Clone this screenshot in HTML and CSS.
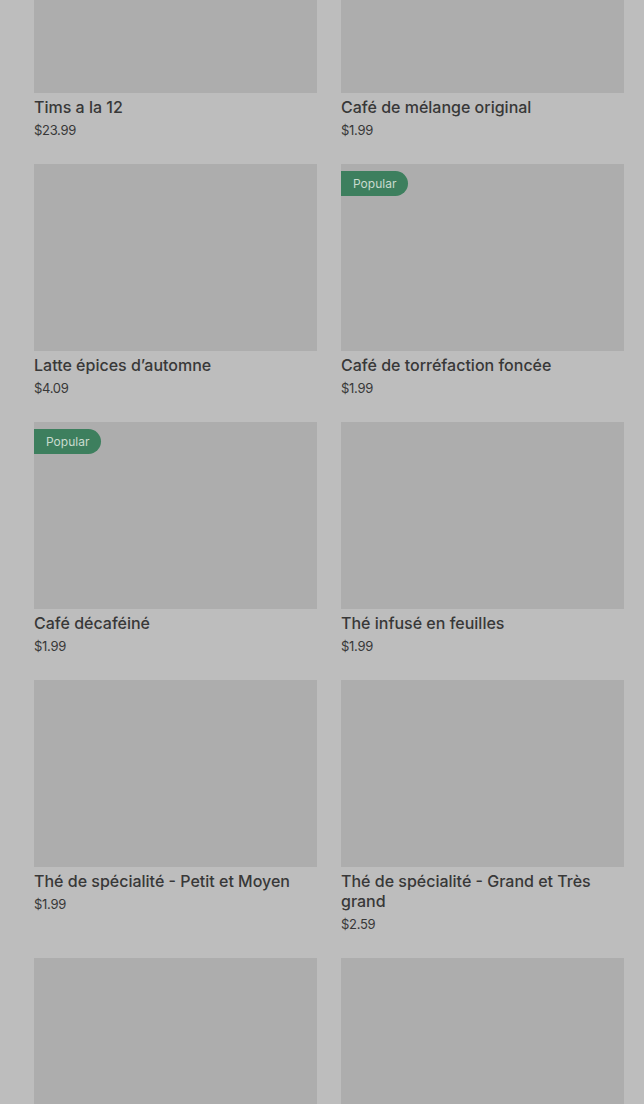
FILE: index.html
```html
<!DOCTYPE html>
<html lang="fr">
<head>
    <meta charset="UTF-8">
    <meta name="viewport" content="width=device-width, initial-scale=1.0">
    <title>Menu - Boissons chaudes</title>
    <link rel="stylesheet" href="styles.css">
</head>
<body>

    <!-- page scrolled down a bit: the first row is partly out of view -->
    <div class="product-grid">
        <div class="product-card">
            <div class="product-image"></div>
            <div class="product-name">Tims a la 12</div>
            <div class="product-price">$23.99</div>
        </div>
        <div class="product-card">
            <div class="product-image"></div>
            <div class="product-name">Café de mélange original</div>
            <div class="product-price">$1.99</div>
        </div>

        <div class="product-card">
            <div class="product-image"></div>
            <div class="product-name">Latte épices d’automne</div>
            <div class="product-price">$4.09</div>
        </div>
        <div class="product-card">
            <div class="product-image">
                <span class="badge">Popular</span>
            </div>
            <div class="product-name">Café de torréfaction foncée</div>
            <div class="product-price">$1.99</div>
        </div>

        <div class="product-card">
            <div class="product-image">
                <span class="badge">Popular</span>
            </div>
            <div class="product-name">Café décaféiné</div>
            <div class="product-price">$1.99</div>
        </div>
        <div class="product-card">
            <div class="product-image"></div>
            <div class="product-name">Thé infusé en feuilles</div>
            <div class="product-price">$1.99</div>
        </div>

        <div class="product-card">
            <div class="product-image"></div>
            <div class="product-name">Thé de spécialité - Petit et Moyen</div>
            <div class="product-price">$1.99</div>
        </div>
        <div class="product-card">
            <div class="product-image"></div>
            <div class="product-name">Thé de spécialité - Grand et Très grand</div>
            <div class="product-price">$2.59</div>
        </div>

        <div class="product-card">
            <div class="product-image"></div>
        </div>
        <div class="product-card">
            <div class="product-image"></div>
        </div>
    </div>

</body>
</html>
```

FILE: styles.css
```css
body {
    margin: 0;
    background-color: #bdbdbd;
    font-family: Inter, Roboto, 'Liberation Sans', Arial, sans-serif;
    color: #383838;
    overflow: hidden;
}

.product-grid {
    display: grid;
    grid-template-columns: 283px 283px;
    column-gap: 24px;
    row-gap: 24px;
    padding: 0 20px 0 34px;
    margin-top: -94px; /* scrolled position */
}

.product-card {
    display: flex;
    flex-direction: column;
}

.product-image {
    position: relative;
    height: 187px;
    background-color: #adadad;
}

.badge {
    position: absolute;
    top: 7px;
    left: 0;
    height: 25px;
    line-height: 25px;
    padding: 0 12px;
    background-color: #3d7f5e;
    color: #c9dbcf;
    font-size: 12px;
    border-radius: 0 13px 13px 0;
}

.product-name {
    margin-top: 4px;
    font-size: 16px;
    font-weight: 500;
    line-height: 20px;
    padding-right: 20px;
}

.product-price {
    margin-top: 3px;
    font-size: 13px;
    line-height: 20px;
    letter-spacing: -0.3px;
}
```
